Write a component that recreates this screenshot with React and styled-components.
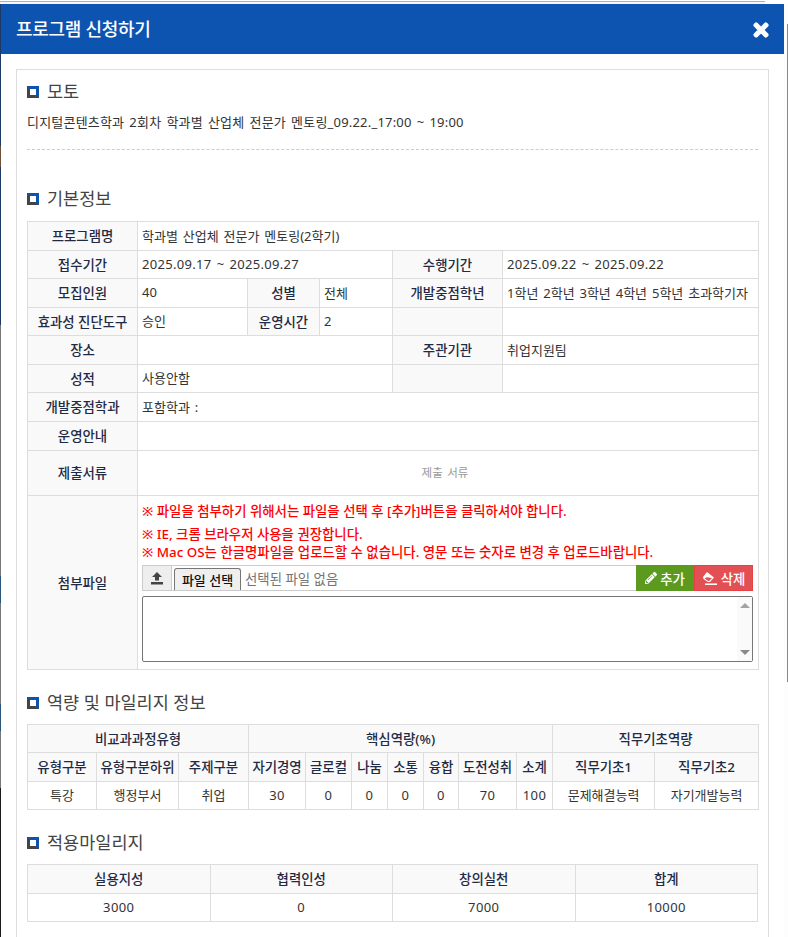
import React from "react";
import styled, { createGlobalStyle } from "styled-components";
import { FaTimes, FaPencilAlt } from "react-icons/fa";

const GlobalStyle = createGlobalStyle`
  html, body {
    margin: 0;
    padding: 0;
    height: 937px;
    overflow: hidden;
    background: #fff;
  }
  * {
    box-sizing: border-box;
  }
`;

function Upload() {
  return (
    <svg width="14" height="14" viewBox="0 0 14 14">
      <path d="M7 1 L12 6 H9 V9.5 H5 V6 H2 Z M1 11 H13 V13.5 H1 Z" fill="#444" />
    </svg>
  );
}

function Eraser() {
  return (
    <svg width="16" height="15" viewBox="0 0 16 15" fill="none">
      <path d="M5 1 L1 6 L1.5 8 L6 11 H8 L12 6.5 Z" fill="#fff" />
      <path d="M4.6 6.2 L10 7 L7.2 10 H6.2 L2.6 7.6 Z" fill="#e25054" />
      <path d="M3 13.2 H15" stroke="#fff" strokeWidth="1.6" />
    </svg>
  );
}

function App() {
  return (
    <Shell>
      <GlobalStyle />
      <TopLine />
      <Columns>
        <Edge />
        <Modal>
          <Header>
            <Title>프로그램 신청하기</Title>
            <Close>
              <FaTimes size={20} stroke="#fff" strokeWidth={36} />
            </Close>
          </Header>
          <Body>
            <Panel>
              <SectionTitle $top={9}>
                <Mark />
                모토
              </SectionTitle>
              <Memo>디지털콘텐츠학과 2회차 학과별 산업체 전문가 멘토링_09.22._17:00 ~ 19:00</Memo>
              <Dashed />
              <SectionTitle $top={36} $bottom={11}>
                <Mark />
                기본정보
              </SectionTitle>
              <Table>
                <colgroup>
                  <Col $w={110} />
                  <Col $w={110} />
                  <Col $w={72} />
                  <Col $w={73} />
                  <Col $w={110} />
                  <Col $w={256} />
                </colgroup>
                <tbody>
                  <Row $h={29}>
                    <Th>프로그램명</Th>
                    <Td colSpan={5}>학과별 산업체 전문가 멘토링(2학기)</Td>
                  </Row>
                  <Row $h={28}>
                    <Th>접수기간</Th>
                    <DateTd colSpan={3}>2025.09.17 ~ 2025.09.27</DateTd>
                    <Th>수행기간</Th>
                    <DateTd>2025.09.22 ~ 2025.09.22</DateTd>
                  </Row>
                  <Row $h={29}>
                    <Th>모집인원</Th>
                    <Td>40</Td>
                    <Th>성별</Th>
                    <Td>전체</Td>
                    <Th>개발중점학년</Th>
                    <Td>1학년 2학년 3학년 4학년 5학년 초과학기자</Td>
                  </Row>
                  <Row $h={28}>
                    <Th>효과성 진단도구</Th>
                    <Td>승인</Td>
                    <Th>운영시간</Th>
                    <Td>2</Td>
                    <Th />
                    <Td />
                  </Row>
                  <Row $h={29}>
                    <Th>장소</Th>
                    <Td colSpan={3} />
                    <Th>주관기관</Th>
                    <Td>취업지원팀</Td>
                  </Row>
                  <Row $h={28}>
                    <Th>성적</Th>
                    <Td colSpan={3}>사용안함</Td>
                    <Th />
                    <Td />
                  </Row>
                  <Row $h={29}>
                    <Th>개발중점학과</Th>
                    <Td colSpan={5}>포함학과 :</Td>
                  </Row>
                  <Row $h={29}>
                    <Th>운영안내</Th>
                    <Td colSpan={5} />
                  </Row>
                  <Row $h={45}>
                    <Th>제출서류</Th>
                    <MutedTd colSpan={5}>제출 서류</MutedTd>
                  </Row>
                  <Row $h={174}>
                    <Th>첨부파일</Th>
                    <AttachCell colSpan={5}>
                      <Notice $gap={5}>※ 파일을 첨부하기 위해서는 파일을 선택 후 [추가]버튼을 클릭하셔야 합니다.</Notice>
                      <Notice>※ IE, 크롬 브라우저 사용을 권장합니다.</Notice>
                      <Notice $gap={4}>※ Mac OS는 한글명파일을 업로드할 수 없습니다. 영문 또는 숫자로 변경 후 업로드바랍니다.</Notice>
                      <FileRow>
                        <UploadAddon>
                          <Upload />
                        </UploadAddon>
                        <FileButton>파일 선택</FileButton>
                        <FileName>선택된 파일 없음</FileName>
                        <ActionButton $w={58} $bg="#5c9a1f" $line="#5c9a1f">
                          <FaPencilAlt size={12} />
                          추가
                        </ActionButton>
                        <ActionButton $w={59} $bg="#e25054" $line="#e64246">
                          <Eraser />
                          삭제
                        </ActionButton>
                      </FileRow>
                      <ListBox>
                        <ScrollTrack>
                          <ArrowUp />
                          <ArrowDown />
                        </ScrollTrack>
                      </ListBox>
                    </AttachCell>
                  </Row>
                </tbody>
              </Table>
              <SectionTitle $top={20} $bottom={10}>
                <Mark />
                역량 및 마일리지 정보
              </SectionTitle>
              <Table>
                <colgroup>
                  <Col $w={69} />
                  <Col $w={82} />
                  <Col $w={70} />
                  <Col $w={57} />
                  <Col $w={46} />
                  <Col $w={36} />
                  <Col $w={36} />
                  <Col $w={35} />
                  <Col $w={58} />
                  <Col $w={36} />
                  <Col $w={102} />
                  <Col $w={104} />
                </colgroup>
                <tbody>
                  <Row $h={28}>
                    <Th colSpan={3}>비교과과정유형</Th>
                    <Th colSpan={7}>핵심역량(%)</Th>
                    <Th colSpan={2}>직무기초역량</Th>
                  </Row>
                  <Row $h={29}>
                    <Th>유형구분</Th>
                    <Th>유형구분하위</Th>
                    <Th>주제구분</Th>
                    <Th>자기경영</Th>
                    <Th>글로컬</Th>
                    <Th>나눔</Th>
                    <Th>소통</Th>
                    <Th>융합</Th>
                    <Th>도전성취</Th>
                    <Th>소계</Th>
                    <Th>직무기초1</Th>
                    <Th>직무기초2</Th>
                  </Row>
                  <Row $h={28}>
                    <CenterTd>특강</CenterTd>
                    <CenterTd>행정부서</CenterTd>
                    <CenterTd>취업</CenterTd>
                    <NumTd>30</NumTd>
                    <NumTd>0</NumTd>
                    <NumTd>0</NumTd>
                    <NumTd>0</NumTd>
                    <NumTd>0</NumTd>
                    <NumTd>70</NumTd>
                    <NumTd>100</NumTd>
                    <CenterTd>문제해결능력</CenterTd>
                    <CenterTd>자기개발능력</CenterTd>
                  </Row>
                </tbody>
              </Table>
              <SectionTitle $top={20} $bottom={10}>
                <Mark />
                적용마일리지
              </SectionTitle>
              <Table>
                <tbody>
                  <Row $h={29}>
                    <Th>실용지성</Th>
                    <Th>협력인성</Th>
                    <Th>창의실천</Th>
                    <Th>합계</Th>
                  </Row>
                  <Row $h={28}>
                    <NumTd>3000</NumTd>
                    <NumTd>0</NumTd>
                    <NumTd>7000</NumTd>
                    <NumTd>10000</NumTd>
                  </Row>
                </tbody>
              </Table>
            </Panel>
          </Body>
        </Modal>
        <Gutter>
          <GutterLine />
        </Gutter>
      </Columns>
    </Shell>
  );
}

const Shell = styled.div`
  width: 788px;
  height: 937px;
  overflow: hidden;
  font-family: "Noto Sans", "Noto Sans CJK KR", sans-serif;
  color: #333;
`;
const TopLine = styled.div`
  height: 4px;
  border-top: 1px solid #fff;
  background: linear-gradient(#aab0b8 0 1px, #f4f6fb 1px);
  background-size: 765px 100%;
  background-repeat: no-repeat;
`;
const Columns = styled.div`
  display: flex;
  height: 933px;
`;
const Edge = styled.div`
  width: 1px;
  background: linear-gradient(
    #1c3a63 0 142px,
    #6b5138 142px 163px,
    #1c3a63 163px 321px,
    #777 321px 572px,
    #2a5478 572px 599px,
    #777 599px 700px,
    #2a5478 700px 727px,
    #777 727px 784px,
    #1a1a1a 784px
  );
`;
const Modal = styled.div`
  width: 783px;
  background: #fff;
`;
const Header = styled.div`
  height: 50px;
  padding: 0 13px 0 15px;
  background: #0d54b1;
  display: flex;
  align-items: center;
  justify-content: space-between;
`;
const Title = styled.h2`
  margin: 0 0 2px;
  font-size: 18px;
  font-weight: 500;
  color: #fff;
  letter-spacing: -0.3px;
`;
const Close = styled.div`
  display: flex;
  margin-top: 1px;
  color: #fff;
`;
const Body = styled.div`
  padding: 15px;
`;
const Panel = styled.div`
  border: 1px solid #ddd;
  padding: 0 10px;
  height: 880px;
`;
const SectionTitle = styled.h3`
  margin: ${(p) => p.$top}px 0 ${(p) => p.$bottom || 0}px;
  height: 24px;
  padding-bottom: 2px;
  display: flex;
  align-items: center;
  gap: 8px;
  font-size: 17.5px;
  font-weight: 400;
  color: #444;
`;
const Mark = styled.span`
  width: 12px;
  height: 12px;
  margin-top: 3px;
  border: 3px solid #0d54b1;
  border-left-color: #444;
  border-bottom-color: #444;
`;
const Memo = styled.p`
  margin: 9px 0 0;
  font-size: 13px;
  line-height: 20px;
  letter-spacing: 0.2px;
  word-spacing: 1.5px;
  color: #333;
`;
const Dashed = styled.div`
  margin-top: 17px;
  border-top: 1px dashed #ccc;
`;
const Table = styled.table`
  width: 731px;
  table-layout: fixed;
  border-collapse: collapse;
  font-size: 13px;
`;
const Col = styled.col`
  width: ${(p) => p.$w}px;
`;
const Row = styled.tr`
  height: ${(p) => p.$h}px;
`;
const Th = styled.th`
  border: 1px solid #ddd;
  background: #f9f9f9;
  padding: 0 0 2px;
  font-size: 13.4px;
  font-weight: 500;
  text-align: center;
  color: #1f2a44;
  white-space: nowrap;
`;
const Td = styled.td`
  border: 1px solid #ddd;
  padding: 0 4px 2px;
  color: #333;
  word-spacing: 1.5px;
  white-space: nowrap;
`;
const DateTd = styled(Td)`
  letter-spacing: 0.3px;
`;
const CenterTd = styled(Td)`
  text-align: center;
`;
const NumTd = styled(CenterTd)`
  letter-spacing: 0.4px;
`;
const MutedTd = styled(Td)`
  text-align: center;
  padding-right: 10px;
  font-size: 11.5px;
  color: #999;
`;
const AttachCell = styled(Td)`
  vertical-align: top;
  padding: 6px 5px 0 4px;
  word-spacing: normal;
`;
const Notice = styled.div`
  margin-bottom: ${(p) => p.$gap || 0}px;
  font-size: 13.4px;
  line-height: 18px;
  font-weight: 500;
  color: #f00;
`;
const FileRow = styled.div`
  height: 26px;
  display: flex;
  align-items: stretch;
  border-top: 1px solid #ccc;
  border-bottom: 1px solid #ccc;
`;
const UploadAddon = styled.div`
  width: 30px;
  margin-right: 2px;
  background: #eee;
  border-left: 1px solid #ccc;
  border-right: 1px solid #ccc;
  display: flex;
  align-items: center;
  justify-content: center;
`;
const FileButton = styled.div`
  width: 67px;
  margin-top: 2px;
  background: #efefef;
  border: 1px solid #767676;
  border-bottom: 0;
  border-radius: 3px 3px 0 0;
  display: flex;
  align-items: center;
  justify-content: center;
  font-size: 13px;
  font-weight: 500;
  color: #111;
`;
const FileName = styled.div`
  flex: 1;
  padding-left: 4px;
  display: flex;
  align-items: center;
  font-size: 13.4px;
  color: #757575;
`;
const ActionButton = styled.div`
  width: ${(p) => p.$w}px;
  margin: -1px 0;
  background: ${(p) => p.$bg};
  border: 1px solid ${(p) => p.$line};
  display: flex;
  align-items: center;
  justify-content: center;
  gap: 3px;
  font-size: 13.4px;
  font-weight: 500;
  color: #fff;
`;
const ListBox = styled.div`
  height: 66px;
  margin-top: 5px;
  border: 1px solid #767676;
  border-radius: 2px;
  display: flex;
  justify-content: flex-end;
`;
const ScrollTrack = styled.div`
  width: 15px;
  background: #fafafa;
  display: flex;
  flex-direction: column;
  align-items: center;
  justify-content: space-between;
  padding: 6px 0;
`;
const ArrowUp = styled.span`
  border: 5px solid transparent;
  border-top: 0;
  border-bottom: 5px solid #a3a3a3;
`;
const ArrowDown = styled.span`
  border: 5px solid transparent;
  border-bottom: 0;
  border-top: 5px solid #8a8a8a;
`;
const Gutter = styled.div`
  flex: 1;
  background: #fdfdfd;
  padding-left: 3px;
`;
const GutterLine = styled.div`
  width: 1px;
  height: 658px;
  margin-top: 20px;
  background: #888;
`;

export default App;
